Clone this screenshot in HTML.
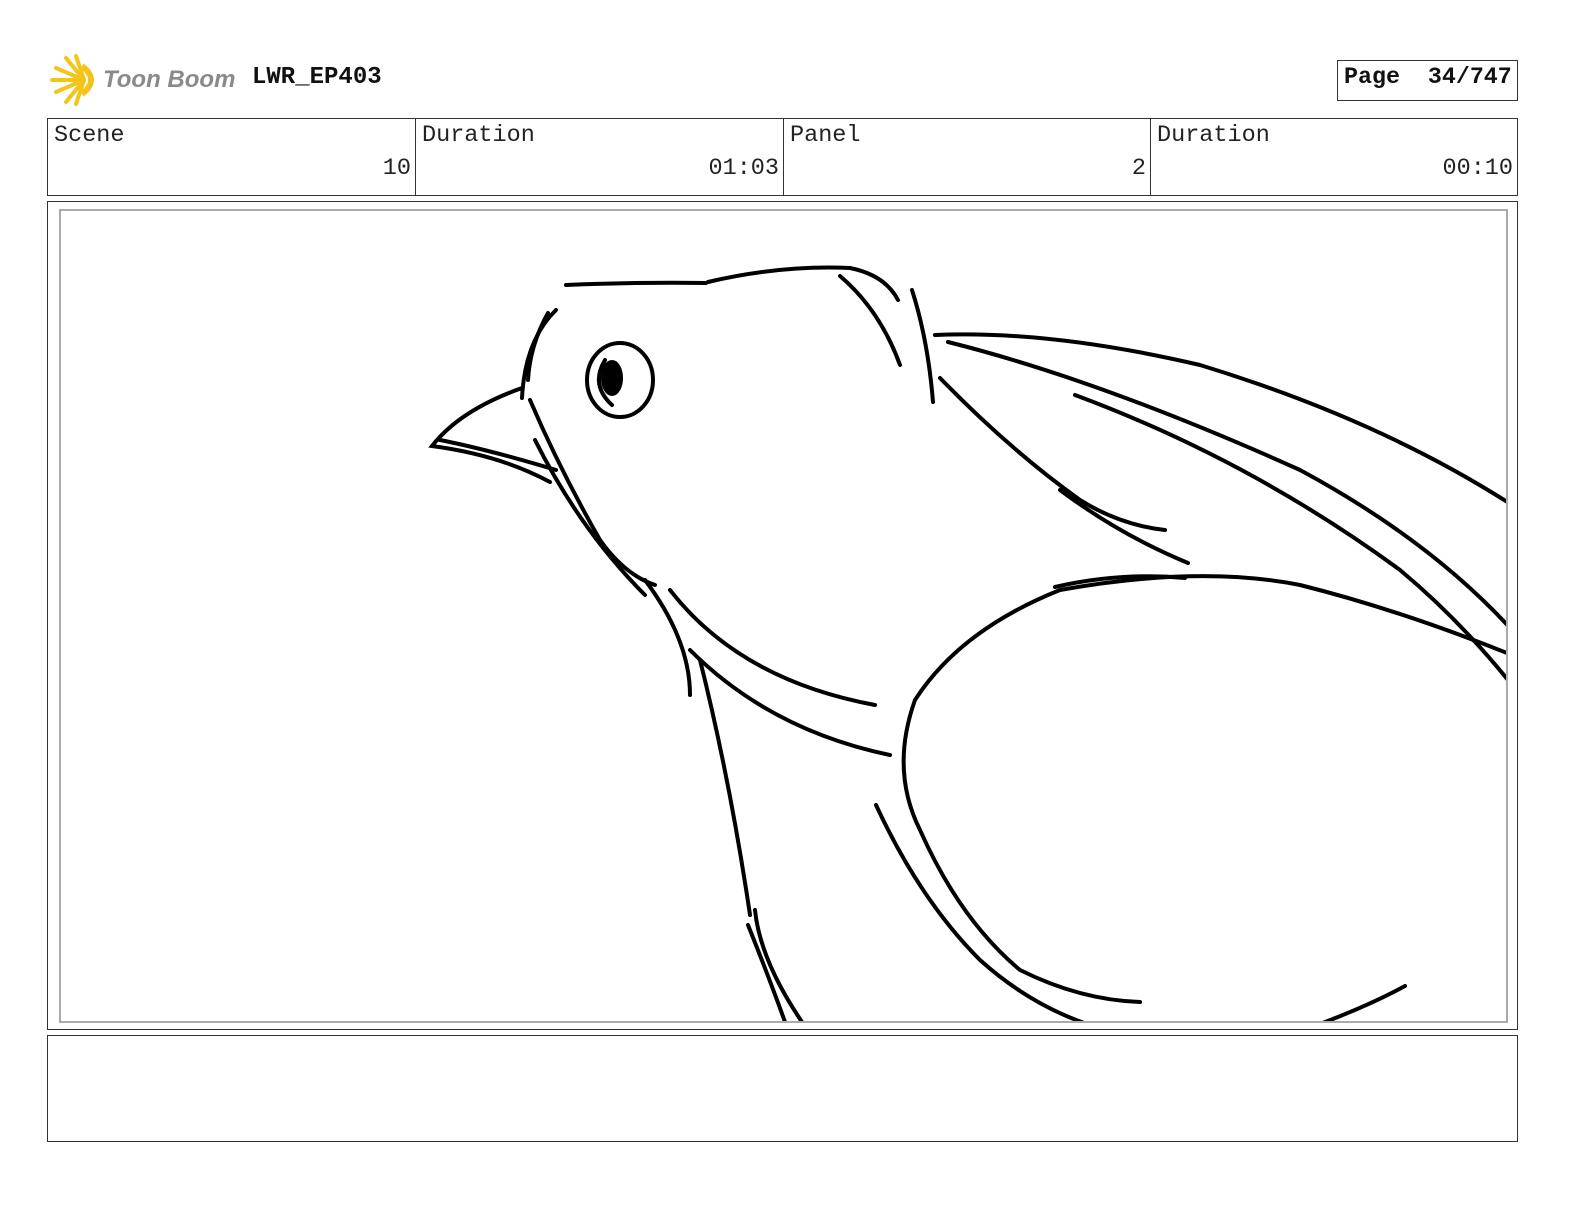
<!DOCTYPE html>
<html style="overflow:hidden"><head><meta charset="utf-8"><style>
html,body{margin:0;padding:0}
body{background:#fff;width:1584px;height:1224px;position:relative;overflow:hidden;font-family:"Liberation Mono",monospace}
.a{position:absolute}
.cell{position:absolute;top:118px;height:78px;border:1px solid #333;box-sizing:border-box;color:#222;font-size:23.5px}
.cell .l{position:absolute;left:6px;top:3px}
.cell .v{position:absolute;right:4px;top:36px}
</style></head><body>
<svg class="a" style="left:48px;top:54px" width="60" height="52" viewBox="0 0 60 52">
<g stroke="#f3c518" stroke-width="4" stroke-linecap="round">
<line x1="36" y1="26" x2="4" y2="26"/><line x1="36" y1="26" x2="8" y2="14"/><line x1="36" y1="26" x2="8" y2="38"/>
<line x1="36" y1="26" x2="18" y2="4"/><line x1="36" y1="26" x2="18" y2="48"/><line x1="36" y1="26" x2="28" y2="2"/><line x1="36" y1="26" x2="28" y2="50"/></g>
<path d="M34 12 Q52 26 34 40" stroke="#f3c518" stroke-width="6" fill="none"/></svg>
<div class="a" style="left:103px;top:66px;font-family:'Liberation Sans',sans-serif;font-style:italic;font-weight:bold;font-size:24px;color:#8a8a8a">Toon Boom</div>
<div class="a" style="left:252px;top:64px;font-weight:bold;font-size:24px;color:#111">LWR_EP403</div>
<div class="a" style="left:1337px;top:60px;width:181px;height:41px;border:1px solid #333;box-sizing:border-box;font-weight:bold;font-size:23.3px;color:#111;padding:3px 0 0 6px;white-space:pre">Page  34/747</div>
<div class="cell" style="left:47px;width:369px"><span class="l">Scene</span><span class="v">10</span></div>
<div class="cell" style="left:415px;width:369px"><span class="l">Duration</span><span class="v">01:03</span></div>
<div class="cell" style="left:783px;width:368px"><span class="l">Panel</span><span class="v">2</span></div>
<div class="cell" style="left:1150px;width:368px"><span class="l">Duration</span><span class="v">00:10</span></div>
<div class="a" style="left:47px;top:201px;width:1471px;height:829px;border:1px solid #333;box-sizing:border-box"></div>
<div class="a" style="left:59px;top:209px;width:1449px;height:814px;border:2px solid #aaa;box-sizing:border-box"></div>
<div class="a" style="left:47px;top:1035px;width:1471px;height:107px;border:1px solid #333;box-sizing:border-box"></div>
<svg class="a" style="left:0;top:0" width="1584" height="1224"><defs><clipPath id="c"><rect x="61" y="211" width="1445" height="810"/></clipPath></defs>
<g clip-path="url(#c)" fill="none" stroke="#000" stroke-width="4" stroke-linecap="round">
<path d="M566 285 Q640 282 706 283"/><path d="M708 282 Q780 265 850 268 Q885 275 898 300"/>
<path d="M840 276 Q880 310 900 365"/><path d="M912 290 Q928 340 933 402"/>
<path d="M556 310 Q525 340 522 398"/><path d="M548 313 Q530 345 528 380"/>
<path d="M522 388 Q460 410 432 446 Q500 455 550 482"/><path d="M440 440 Q490 450 556 470"/>
<path d="M530 400 Q560 470 600 540 Q625 575 655 585"/><path d="M535 440 Q580 530 645 595"/>
<path d="M645 580 Q690 640 690 695"/><path d="M670 590 Q740 680 875 705"/><path d="M690 650 Q770 730 890 755"/>
<path d="M700 660 Q730 780 750 915"/><path d="M755 910 Q760 960 802 1022"/><path d="M748 925 Q770 980 785 1022"/>
<ellipse cx="620" cy="380" rx="33" ry="37"/><path d="M605 360 Q590 385 612 405"/>
<ellipse cx="612" cy="378" rx="9" ry="16" fill="#000"/>
<path d="M935 335 Q1050 330 1200 365 Q1380 420 1512 505"/>
<path d="M948 342 Q1100 380 1300 470 Q1430 540 1512 630"/>
<path d="M1075 395 Q1250 460 1400 570 Q1460 620 1512 685"/>
<path d="M940 378 Q1010 450 1080 500 Q1120 525 1165 530"/><path d="M1060 490 Q1120 535 1188 563"/>
<path d="M1055 587 Q1120 572 1185 578"/>
<path d="M1512 655 Q1400 610 1300 585 Q1200 565 1060 590 Q960 630 915 700 Q890 770 920 830 Q960 920 1020 970 Q1080 1000 1140 1002"/>
<path d="M876 805 Q920 900 980 960 Q1030 1005 1090 1025"/>
<path d="M1320 1024 Q1370 1005 1405 986"/>
</g></svg>
</body></html>
